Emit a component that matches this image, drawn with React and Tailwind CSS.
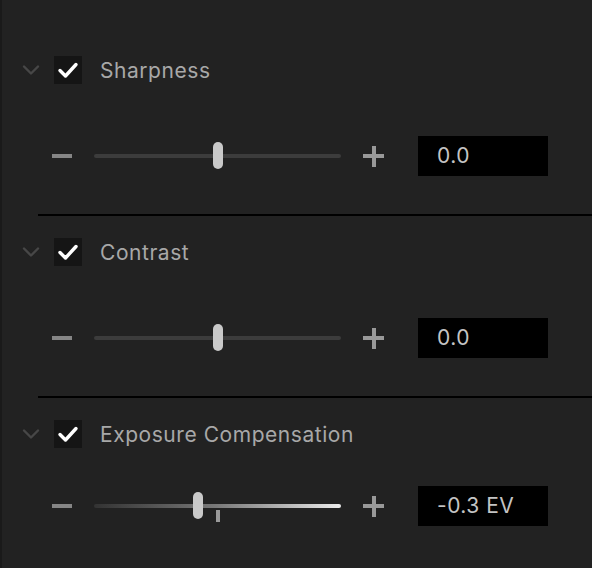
import React from "react";

const Chevron = () => (
  <svg width="18" height="14" viewBox="0 0 18 14" className="shrink-0">
    <path d="M2 3.5 L9 10.5 L16 3.5" fill="none" stroke="#474747" strokeWidth="2.4" strokeLinecap="round" strokeLinejoin="round" />
  </svg>
);

const Checkbox = () => (
  <div className="w-[28px] h-[28px] bg-[#151515] flex items-center justify-center shrink-0">
    <svg width="22" height="18" viewBox="0 0 22 18">
      <path d="M3 9.5 L8.5 15 L19 3.5" fill="none" stroke="#ffffff" strokeWidth="3.4" strokeLinecap="round" strokeLinejoin="round" />
    </svg>
  </div>
);

const Section = ({ title, value, pos, exposure, last }) => (
  <div className="pt-[22px]">
    {/* HEADER */}
    <div className="flex items-center h-[28px]">
      <div className="w-[52px] pl-[20px] flex items-center">
        <Chevron />
      </div>
      <Checkbox />
      <span className="ml-[18px] mt-[1px] text-[21px] text-[#a8a8a8] tracking-[0.55px]">{title}</span>
    </div>

    {/* SLIDER */}
    <div className={`flex items-center ${exposure ? "mt-[38px]" : "mt-[52px]"}`}>
      <div className="ml-[50px] w-[20px] h-[4px] bg-[#868686]" />
      <div className="relative ml-[22px] w-[247px] h-[40px] flex items-center">
        <div
          className={`w-full h-[4px] rounded-full ${
            exposure ? "bg-linear-to-r from-[#333333] via-[#7a7a7a] to-[#ececec]" : "bg-[#3c3c3c]"
          }`}
        />
        <div
          className="absolute top-[6px] w-[10px] h-[27px] rounded-full bg-[#c9c9c9]"
          style={{ left: pos - 5 }}
        />
        {exposure && <div className="absolute left-[122px] top-[24px] w-[4px] h-[12px] bg-[#9a9a9a]" />}
      </div>
      <div className="relative ml-[22px] w-[21px] h-[21px]">
        <div className="absolute left-0 top-[8.5px] w-[21px] h-[4px] bg-[#999999]" />
        <div className="absolute left-[8.5px] top-0 w-[4px] h-[21px] bg-[#999999]" />
      </div>
      <div className="ml-[34px] w-[130px] h-[40px] bg-black flex items-center pl-[19px] text-[21px] tracking-[0.5px] text-[#c4c4c4]">
        {value}
      </div>
    </div>

    {!last && <div className="ml-[36px] mt-[38px] h-[2px] bg-black" />}
  </div>
);

export default function App() {
  return (
    <div
      className="w-[592px] h-[568px] overflow-hidden bg-[#222222] border-l-2 border-[#1a1a1a] pt-[34px]"
      style={{ fontFamily: "Inter, 'Liberation Sans', sans-serif" }}
    >
      <Section title="Sharpness" value="0.0" pos={123.5} />
      <Section title="Contrast" value="0.0" pos={123.5} />
      <Section title="Exposure Compensation" value="-0.3 EV" pos={104} exposure last />
    </div>
  );
}
